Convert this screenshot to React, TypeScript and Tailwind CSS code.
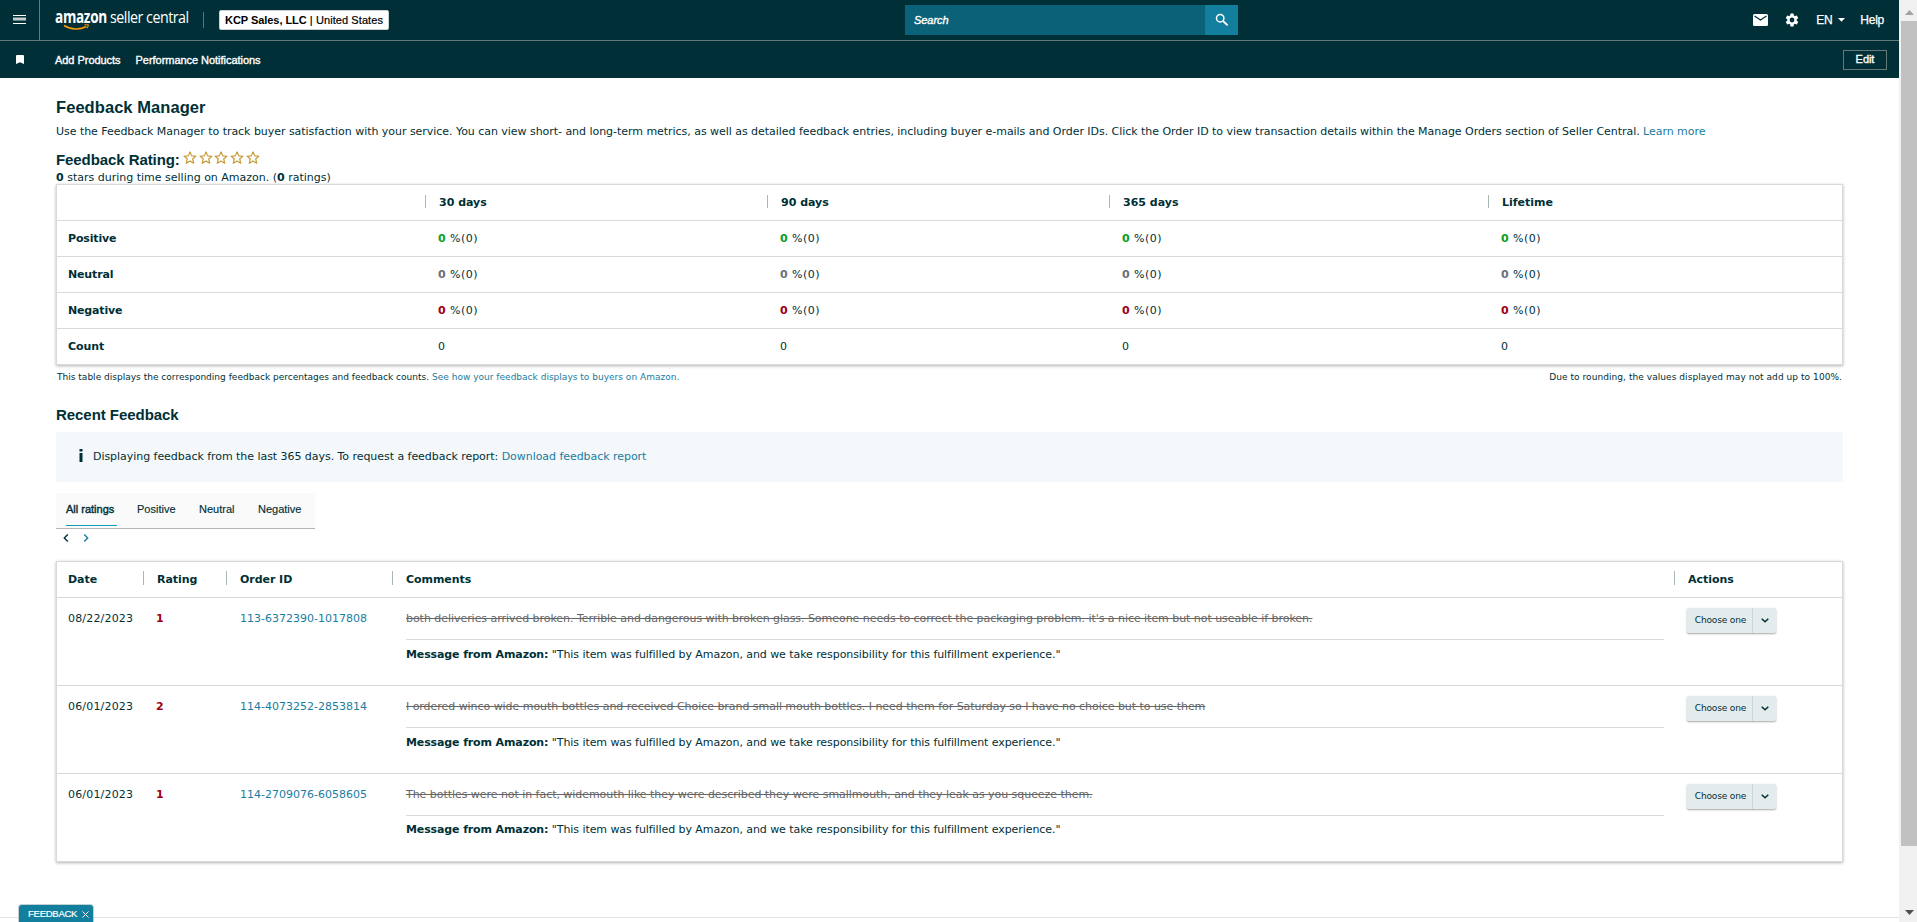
import React from "react";

type FeedbackRow = {
  date: string;
  rating: number;
  orderId: string;
  comment: string;
  messageClass: string;
};

const periods = ["30 days", "90 days", "365 days", "Lifetime"];

const metrics = [
  { label: "Positive", color: "text-[#0aa01c]" },
  { label: "Neutral", color: "text-[#6b6f76]" },
  { label: "Negative", color: "text-[#a00014]" },
];

const feedback: FeedbackRow[] = [
  {
    date: "08/22/2023",
    rating: 1,
    orderId: "113-6372390-1017808",
    comment:
      "both deliveries arrived broken. Terrible and dangerous with broken glass. Someone needs to correct the packaging problem. it's a nice item but not useable if broken.",
    messageClass: "pt-[7px]",
  },
  {
    date: "06/01/2023",
    rating: 2,
    orderId: "114-4073252-2853814",
    comment:
      "I ordered winco wide mouth bottles and received Choice brand small mouth bottles. I need them for Saturday so I have no choice but to use them",
    messageClass: "pt-[7px]",
  },
  {
    date: "06/01/2023",
    rating: 1,
    orderId: "114-2709076-6058605",
    comment:
      "The bottles were not in fact, widemouth like they were described they were smallmouth, and they leak as you squeeze them.",
    messageClass: "pt-[6px]",
  },
];

const Star = () => (
  <svg width="16" height="14" viewBox="0 0 16 14" className="-mr-[0.2px] shrink-0">
    <path
      d="M7 .9l1.7 4 4.3.3-3.3 2.8 1.1 4.3L7 10l-3.8 2.3L4.300 8 1 5.200l4.300-.3z"
      fill="none"
      stroke="#c7962c"
      strokeWidth="1.1"
      strokeLinejoin="round"
    />
  </svg>
);

const Header = () => (
  <header className="h-[78px] bg-[#002f38] text-white font-['Liberation_Sans',sans-serif]">
    <div className="flex h-[41px] border-b border-[#647a77]">
      <button className="flex w-10 shrink-0 items-center border-r border-[#647a77] pb-px pl-[13px]">
        <svg width="13" height="9" viewBox="0 0 13 9">
          <path d="M0 .5h13M0 8.5h13" stroke="#fff" />
          <path d="M0 4h13" stroke="#c3cdcd" strokeWidth="3" />
        </svg>
      </button>

      {/* Logo */}
      <div className="relative ml-[15px] flex h-[31px] w-[134px] shrink-0 items-baseline pt-2 font-['Open_Sans',sans-serif] leading-[18px] whitespace-nowrap">
        <span className="w-[55px] origin-left scale-x-[0.8] text-[17px] font-bold tracking-[-0.4px]">
          amazon
        </span>
        <span className="origin-left scale-x-[0.89] text-[16px] tracking-[-0.55px]">
          seller central
        </span>
        <svg
          width="28"
          height="7"
          viewBox="0 0 28 7"
          className="absolute top-[24px] left-[8px]"
        >
          <path d="M1 1.5c7 4.500 16 4.500 22.500 1" fill="none" stroke="#f79a0c" strokeWidth="1.5" />
          <path d="M21.5.8h4l-1.2 3.5" fill="none" stroke="#f79a0c" strokeWidth="1" />
        </svg>
      </div>

      <div className="mt-3 ml-[14px] h-4 w-px bg-[#5d7475]" />
      <div className="mt-[10px] ml-[15px] flex h-5 w-[170px] shrink-0 items-center rounded-[2px] border border-[#c9d1d1] bg-white pl-[5px] text-[11px] leading-4 whitespace-pre text-black">
        <span className="font-bold">KCP Sales, LLC</span>
        <span className="tracking-[0.08px] [-webkit-text-stroke:0.2px]"> | United States</span>
      </div>

      <div className="mt-[5px] ml-[516px] flex h-[30px] w-[333px]">
        <div className="flex w-[300px] items-center bg-[#0b6178] pl-[9px] text-[11px] italic [-webkit-text-stroke:0.35px]">
          Search
        </div>
        <button className="flex w-[33px] items-center justify-center bg-[#127f9f]">
          <svg width="14" height="14" viewBox="0 0 14 14" fill="none" stroke="#fff">
            <circle cx="5.2" cy="5.2" r="3.7" strokeWidth="1.5" />
            <path d="M8 8l4.6 4.4" strokeWidth="1.8" />
          </svg>
        </button>
      </div>

      <div className="ml-auto flex h-10 items-center pr-[15px] text-[12px] [-webkit-text-stroke:0.25px]">
        <svg width="15" height="12" viewBox="0 0 15 12" className="mr-4">
          <rect width="15" height="12" rx="1.5" fill="#fff" />
          <path d="M1.5 2l6 4 6-4" fill="none" stroke="#002f38" strokeWidth="1.3" />
        </svg>
        <svg width="16" height="16" viewBox="0 0 24 24" className="mr-4">
          <path
            fill="#fff"
            d="M19.14 12.94c.04-.3.06-.61.06-.94s-.02-.64-.07-.94l2.03-1.58a.49.49 0 0 0 .12-.61l-1.92-3.32a.49.49 0 0 0-.59-.22l-2.39.96c-.5-.38-1.03-.7-1.62-.94l-.36-2.54a.48.48 0 0 0-.48-.41h-3.84a.47.47 0 0 0-.47.41l-.36 2.54c-.59.24-1.13.57-1.62.94l-2.39-.96a.48.48 0 0 0-.59.22L2.74 8.87a.47.47 0 0 0 .12.61l2.03 1.58c-.05.3-.09.63-.09.94s.02.64.07.94l-2.03 1.58a.49.49 0 0 0-.12.61l1.92 3.32c.12.22.37.29.59.22l2.39-.96c.5.38 1.03.7 1.62.94l.36 2.54c.05.24.24.41.48.41h3.84c.24 0 .44-.17.47-.41l.36-2.54c.59-.24 1.13-.56 1.62-.94l2.39.96c.22.08.47 0 .59-.22l1.92-3.32a.47.47 0 0 0-.12-.61zM12 15.6a3.6 3.6 0 1 1 0-7.2 3.6 3.6 0 0 1 0 7.2z"
          />
        </svg>
        <span className="tracking-[-0.25px]">EN</span>
        <svg width="7" height="4" viewBox="0 0 7 4" className="mr-[15px] ml-[6px]">
          <path d="M0 0h7L3.5 3.8z" fill="#fff" />
        </svg>
        <span className="tracking-[-0.25px]">Help</span>
      </div>
    </div>

    <div className="flex h-[37px] items-center text-[11px] [-webkit-text-stroke:0.35px]">
      <svg width="8" height="9" viewBox="0 0 8 9" className="ml-4 shrink-0">
        <path d="M0 1a1 1 0 0 1 1-1h6a1 1 0 0 1 1 1v8L4 7.2 0 9z" fill="#fff" />
      </svg>
      <span className="ml-[31px] pt-[2px] tracking-[-0.04px]">Add Products</span>
      <span className="ml-[15px] pt-[2px] tracking-[-0.04px]">Performance Notifications</span>
      <button className="mr-3 ml-auto h-5 w-11 border border-[#647a77] text-[11px]">Edit</button>
    </div>
  </header>
);

const SummaryTable = () => (
  <div className="border border-[#d5dbdb] shadow-[0_1px_3px_rgba(0,0,0,0.3)]">
    <div className="grid h-9 grid-cols-[368px_342px_342px_379px_1fr] items-center border-b border-[#d5dbdb] pt-[2px] font-bold">
      <span />
      {periods.map((period) => (
        <div key={period} className="flex items-center">
          <span className="mb-[5px] h-[13px] w-px bg-[#aab7b8]" />
          <span className="pl-[13px] tracking-normal">{period}</span>
        </div>
      ))}
    </div>
    {metrics.map((m) => (
      <div
        key={m.label}
        className="grid h-9 grid-cols-[368px_342px_342px_379px_1fr] items-center border-b border-[#d5dbdb] pt-[2px]"
      >
        <b className="pl-[11px] tracking-[-0.15px]">{m.label}</b>
        {periods.map((period) => (
          <span key={period} className="pl-[13px] tracking-[0.45px]">
            <b className={m.color}>0</b> %(0)
          </span>
        ))}
      </div>
    ))}
    <div className="grid h-[35px] grid-cols-[368px_342px_342px_379px_1fr] items-center pt-[2px]">
      <b className="pl-[11px]">Count</b>
      {periods.map((period) => (
        <span key={period} className="pl-[13px]">
          0
        </span>
      ))}
    </div>
  </div>
);

const ActionButton = () => (
  <button className="flex h-[25px] w-[89px] rounded-[2px] bg-[#e3ebed] text-[9px] shadow-[0_1px_2px_rgba(0,0,0,0.35)]">
    <span className="flex h-full w-[66px] items-center justify-center border-r border-[#cdd6d8] pb-[2px] pl-[2px] tracking-[-0.15px] whitespace-nowrap">
      Choose one
    </span>
    <span className="flex h-full flex-1 items-center justify-center">
      <svg width="8" height="5" viewBox="0 0 8 5">
        <path d="M.7.7L4 3.8 7.3.7" fill="none" stroke="#002f36" strokeWidth="1.5" />
      </svg>
    </span>
  </button>
);

const FeedbackTable = () => (
  <div className="border border-[#d5dbdb] shadow-[0_1px_3px_rgba(0,0,0,0.3)]">
    <div className="grid h-9 grid-cols-[86px_83px_166px_1282px_1fr] items-center border-b border-[#d5dbdb] pt-[2px] font-bold">
      <span className="pl-[11px]">Date</span>
      {["Rating", "Order ID", "Comments", "Actions"].map((title) => (
        <div key={title} className="flex items-center">
          <span className="mb-[5px] h-[14px] w-px bg-[#aab7b8]" />
          <span className="pl-[13px]">{title}</span>
        </div>
      ))}
    </div>
    {feedback.map((row) => (
      <div
        key={row.orderId}
        className="grid h-[88px] grid-cols-[86px_83px_166px_1282px_1fr] border-b border-[#d5dbdb] leading-4 last:h-[87px] last:border-b-0"
      >
        <span className="pt-[13px] pl-[11px] tracking-[0.18px]">{row.date}</span>
        <b className="pt-[13px] pl-[13px] text-[#a00014]">{row.rating}</b>
        <a className="pt-[13px] pl-[14px] tracking-normal text-[#1a7c9f]">{row.orderId}</a>
        <div className="pr-[10px] pl-[14px] whitespace-nowrap">
          <p className="h-[42px] border-b border-[#d5dbdb] pt-[13px] text-[#666] line-through">
            {row.comment}
          </p>
          <p className={row.messageClass}>
            <b className="tracking-[-0.12px]">Message from Amazon:</b>{" "}
            <span className="tracking-[-0.07px]">
              "This item was fulfilled by Amazon, and we take responsibility for this fulfillment
              experience."
            </span>
          </p>
        </div>
        <div className="pt-[10px] pl-[13px]">
          <ActionButton />
        </div>
      </div>
    ))}
  </div>
);

const App: React.FC = () => {
  return (
    <div className="flex h-[922px] w-[1917px] overflow-hidden bg-white font-['DejaVu_Sans',Verdana,sans-serif] text-[11px] tracking-[-0.045px] text-[#002f36]">
      <div className="relative flex h-full w-[1899px] flex-col">
        <Header />

        <main className="h-[839px] pr-14 pl-14">
          <h1 className="pt-[19px] font-['Liberation_Sans',sans-serif] text-[16.5px] leading-5 font-bold tracking-[0.06px]">
            Feedback Manager
          </h1>
          <p className="mt-[7px] leading-4 tracking-[-0.039px] whitespace-nowrap">
            Use the Feedback Manager to track buyer satisfaction with your service. You can view
            short- and long-term metrics, as well as detailed feedback entries, including buyer
            e-mails and Order IDs. Click the Order ID to view transaction details within the Manage
            Orders section of Seller Central. <a className="text-[#1a7c9f]">Learn more</a>
          </p>
          <div className="mt-[10px] flex h-5 items-center">
            <h2 className="font-['Liberation_Sans',sans-serif] text-[15px] leading-5 font-bold tracking-[-0.08px]">
              Feedback Rating:
            </h2>
            <div className="mb-[4px] ml-[3px] flex">
              {[1, 2, 3, 4, 5].map((n) => (
                <Star key={n} />
              ))}
            </div>
          </div>
          <p className="h-[14px] leading-[15px] tracking-normal">
            <b>0</b> stars during time selling on Amazon. (<b>0</b> ratings)
          </p>

          <SummaryTable />
          <div className="flex justify-between px-px pt-[5px] text-[9px] leading-[14px]">
            <span className="tracking-[0.013px]">
              This table displays the corresponding feedback percentages and feedback counts.{" "}
              <a className="text-[#1a7c9f]">See how your feedback displays to buyers on Amazon.</a>
            </span>
            <span className="tracking-[0.06px]">
              Due to rounding, the values displayed may not add up to 100%.
            </span>
          </div>

          <h2 className="mt-[21px] font-['Liberation_Sans',sans-serif] text-[15px] leading-5 font-bold tracking-[-0.05px]">
            Recent Feedback
          </h2>
          <div className="mt-[7px] flex h-[50px] items-center bg-[#f4f8fb] pl-[23px]">
            <svg width="4" height="13" viewBox="0 0 4 13" className="mr-[10px] mb-1">
              <path d="M.5 0h3v2.5h-3zM.5 4h3v9h-3z" fill="#002f36" />
            </svg>
            <span>
              Displaying feedback from the last 365 days. To request a feedback report:{" "}
              <a className="text-[#1a7c9f]">Download feedback report</a>
            </span>
          </div>

          {/* Tabs */}
          <div className="mt-[11px] flex h-9 w-[259px] border-b border-[#b5b5b5] bg-[#fafafa] pl-[10px] font-['Liberation_Sans',sans-serif] text-[11px] tracking-normal">
            <span className="mr-[20px] h-[33px] w-[51px] border-b border-[#0f9fb5] pt-2 whitespace-nowrap [-webkit-text-stroke:0.4px]">
              All ratings
            </span>
            <span className="w-[62px] pt-2 [-webkit-text-stroke:0.15px]">Positive</span>
            <span className="w-[59px] pt-2 [-webkit-text-stroke:0.15px]">Neutral</span>
            <span className="pt-2 [-webkit-text-stroke:0.15px]">Negative</span>
          </div>
          <div className="flex h-8 gap-[14px] pt-[5px] pl-[7px]">
            <svg width="6" height="8" viewBox="0 0 6 8">
              <path d="M4.8.5L1.3 4l3.5 3.5" fill="none" stroke="#002f36" strokeWidth="1.4" />
            </svg>
            <svg width="6" height="8" viewBox="0 0 6 8">
              <path d="M1.2.5L4.7 4 1.2 7.5" fill="none" stroke="#1a7c9f" strokeWidth="1.4" />
            </svg>
          </div>

          <FeedbackTable />
        </main>

        <div className="h-px w-full shrink-0 bg-[#e3e3e3]" />
        <div className="absolute bottom-0 left-[18px] flex h-[18px] w-[76px] items-center gap-[5px] rounded-t-[4px] border border-b-0 border-[#c3d0d2] bg-[#127f9f] pt-px pl-[9px] font-['Liberation_Sans',sans-serif] text-[9.5px] tracking-[-0.25px] text-white [-webkit-text-stroke:0.2px]">
          FEEDBACK
          <svg width="7" height="7" viewBox="0 0 7 7">
            <path d="M.5.5l6 6M6.5.5l-6 6" stroke="#fff" />
          </svg>
        </div>
      </div>

      {/* Scrollbar */}
      <div className="flex h-full w-[18px] flex-col items-end bg-[#f1f1f1]">
        <div className="flex h-[21px] w-4 items-center justify-center">
          <svg width="9" height="5" viewBox="0 0 9 5" className="mt-[3px]">
            <path d="M0 5h9L4.500 0z" fill="#a3a3a3" />
          </svg>
        </div>
        <div className="h-[825px] w-4 bg-[#c1c1c1]" />
        <div className="flex w-4 flex-1 items-end justify-center pb-[7px]">
          <svg width="9" height="5" viewBox="0 0 9 5">
            <path d="M0 0h9L4.500 5z" fill="#505050" />
          </svg>
        </div>
      </div>
    </div>
  );
};

export default App;
